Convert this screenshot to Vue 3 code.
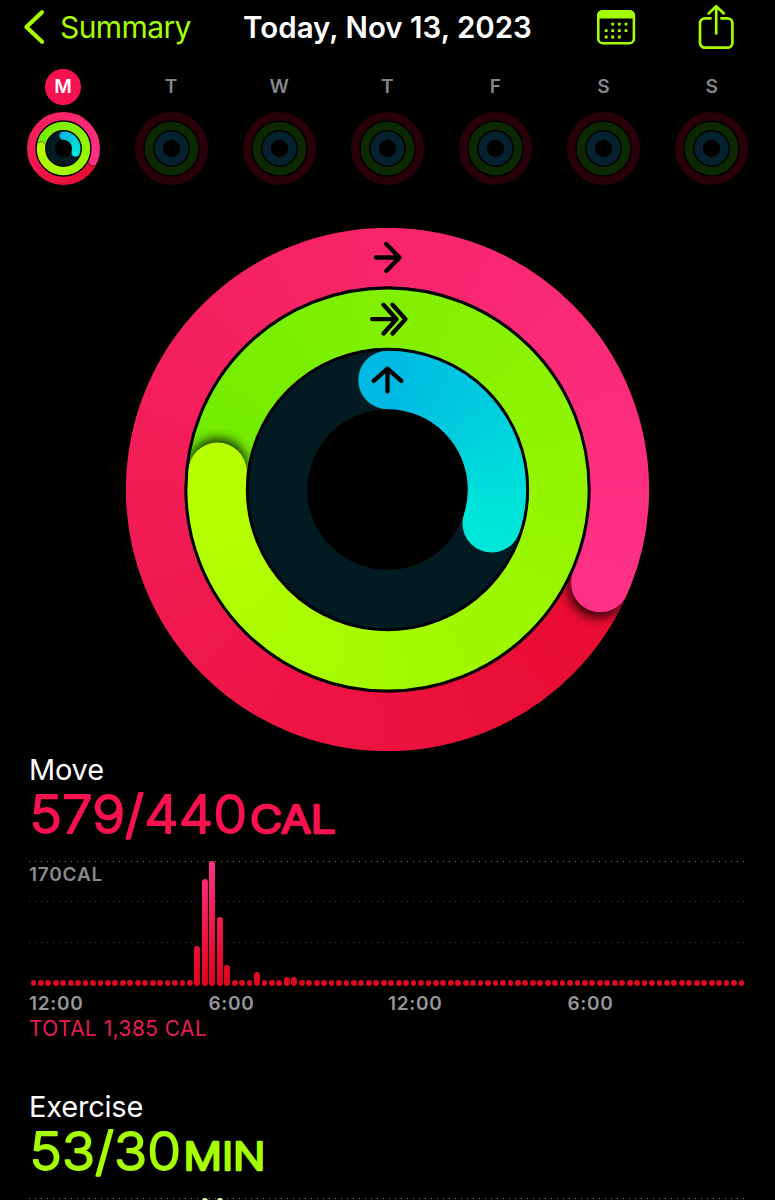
<script setup>
import { h } from 'vue';

const RINGS = [
  { key: 'move', from: [225, 0, 20], to: [255, 49, 135], track: '#250006', idle: '#280007' },
  { key: 'exercise', from: [59, 221, 0], to: [184, 255, 0], track: '#0b2600', idle: '#0b2800' },
  { key: 'stand', from: [0, 185, 226], to: [0, 230, 217], track: '#021b22', idle: '#04212d' },
];

const LARGE = { size: 523, width: 58.4, radii: [232.4, 170.9, 109.5], blur: 6, overlap: 0.5 };
const SMALL = { size: 73, width: 8.3, radii: [32.3, 22.6, 12.8], blur: 0.6, overlap: 8 };

const STEP = 2;

let uid = 0;

function point(c, r, deg) {
  const rad = ((deg - 90) * Math.PI) / 180;
  return [c + r * Math.cos(rad), c + r * Math.sin(rad)];
}

function mix(from, to, t) {
  return `rgb(${from.map((v, i) => Math.round(v + (to[i] - v) * t)).join(',')})`;
}

function drawRing(ring, fraction, layout, index) {
  const c = layout.size / 2;
  const r = layout.radii[index];
  const end = fraction * 360;
  const half = layout.width / 2;
  const band = (stroke) => h('circle', { cx: c, cy: c, r, fill: 'none', stroke, 'stroke-width': layout.width });
  if (!end) return [band(ring.idle)];

  // segments run a little wide and long, the mask trims them to the band
  const segment = (a) => {
    const [x1, y1] = point(c, r, a);
    const [x2, y2] = point(c, r, Math.min(a + STEP + layout.overlap, end));
    return h('path', {
      d: `M${x1} ${y1}A${r} ${r} 0 0 1 ${x2} ${y2}`,
      fill: 'none',
      stroke: mix(ring.from, ring.to, a / end),
      'stroke-width': layout.width + 1,
    });
  };

  const id = `ring-${uid++}`;
  const [sx, sy] = point(c, r, 0);
  const arc = [h('circle', { cx: sx, cy: sy, r: half, fill: mix(ring.from, ring.to, 0) })];

  const tail = Math.max(0, end - 60);
  let a = Math.max(0, end - 420);
  for (; a < tail; a += STEP) arc.push(segment(a));

  if (fraction > 1) {
    const [hx, hy] = point(c, r, end + 1.2);
    arc.push(h('circle', { cx: hx, cy: hy, r: half, fill: '#000', opacity: 0.9, filter: `url(#${id}-blur)` }));
  }

  const [ex, ey] = point(c, r, end);
  arc.push(h('circle', { cx: ex, cy: ey, r: half, fill: mix(ring.from, ring.to, 1) }));
  for (; a < end; a += STEP) arc.push(segment(a));

  return [
    h('mask', { id: `${id}-mask`, maskUnits: 'userSpaceOnUse', x: 0, y: 0, width: layout.size, height: layout.size }, [
      band('#fff'),
    ]),
    h('filter', { id: `${id}-blur`, x: '-50%', y: '-50%', width: '200%', height: '200%' }, [
      h('feGaussianBlur', { stdDeviation: layout.blur }),
    ]),
    band(ring.track),
    h('g', { mask: `url(#${id}-mask)` }, arc),
  ];
}

const ActivityRings = ({ values, layout }) =>
  h(
    'svg',
    { width: layout.size, height: layout.size, viewBox: `0 0 ${layout.size} ${layout.size}` },
    RINGS.map((ring, i) => h('g', { key: ring.key }, drawRing(ring, values[i], layout, i))),
  );
ActivityRings.props = ['values', 'layout'];

const today = [579 / 440, 53 / 30, 0.3];
const empty = [0, 0, 0];

const days = [
  { label: 'M', values: today, selected: true },
  { label: 'T', values: empty },
  { label: 'W', values: empty },
  { label: 'T', values: empty },
  { label: 'F', values: empty },
  { label: 'S', values: empty },
  { label: 'S', values: empty },
];

// quarter-hour buckets, height in px
function buckets(filled) {
  return Array.from({ length: 96 }, (_, i) => filled[i] ?? 6);
}

const sections = [
  {
    key: 'move',
    title: 'Move',
    value: '579/440',
    valueWidth: 217.5,
    unit: 'CAL',
    unitX: 221,
    unitWidth: 85.5,
    peak: '170CAL',
    total: 'TOTAL 1,385 CAL',
    hours: ['12:00', '6:00', '12:00', '6:00'],
    bars: buckets({ 22: 40, 23: 107, 24: 125, 25: 69, 26: 21, 30: 14.5, 31: 6.5, 34: 9, 35: 9 }),
  },
  {
    key: 'exercise',
    title: 'Exercise',
    value: '53/30',
    valueWidth: 151.5,
    unit: 'MIN',
    unitX: 154.5,
    unitWidth: 82,
    bars: buckets({ 23: 125, 25: 125 }),
  },
];
</script>

<template>
  <main class="screen">
    <header class="nav">
      <a class="nav__back">
        <svg width="22" height="36" viewBox="0 0 22 36">
          <path d="M19 3.2 3.4 18 19 32.8" fill="none" stroke="currentColor" stroke-width="4.2" stroke-linecap="round" stroke-linejoin="round" />
        </svg>
        <span class="nav__back-label">Summary</span>
      </a>
      <h1 class="nav__title">Today, Nov 13, 2023</h1>
      <div class="nav__actions">
        <svg width="40" height="44" viewBox="0 0 40 44">
          <rect x="2.3" y="7.3" width="35.6" height="32" rx="4.6" fill="none" stroke="currentColor" stroke-width="2.6" />
          <path d="M1 14.6V11.5A5.5 5.5 0 0 1 6.5 6h27A5.5 5.5 0 0 1 39 11.5v3.1Z" fill="currentColor" />
          <path
            d="M16.7 20.2h.01M23.3 20.2h.01M30 20.2h.01M10.2 26.6h.01M16.7 26.6h.01M23.3 26.6h.01M30 26.6h.01M10.2 33h.01M16.7 33h.01M23.3 33h.01"
            stroke="currentColor"
            stroke-width="2.8"
            stroke-linecap="square"
            fill="none"
          />
        </svg>
        <svg width="36" height="46" viewBox="0 0 36 46">
          <path
            d="M12.6 14.3H7A5 5 0 0 0 2 19.3v19.4a5 5 0 0 0 5 5h22.4a5 5 0 0 0 5-5V19.3a5 5 0 0 0-5-5H23.4M18.2 29.4V3M10.6 9.4l7.6-7.2 7.6 7.2"
            fill="none"
            stroke="currentColor"
            stroke-width="2.7"
            stroke-linecap="round"
            stroke-linejoin="round"
          />
        </svg>
      </div>
    </header>

    <nav class="week">
      <div v-for="(day, i) in days" :key="i" class="week__day">
        <span :class="['week__label', { 'week__label--selected': day.selected }]">{{ day.label }}</span>
        <ActivityRings :values="day.values" :layout="SMALL" />
      </div>
    </nav>

    <div class="rings">
      <ActivityRings :values="today" :layout="LARGE" />
      <svg class="rings__icons" width="523" height="523" viewBox="0.5 0.5 523 523">
        <path d="M250.4 30H273.4M260.8 16.6 274 30 260.8 43.4" />
        <path d="M246.6 91.6H270M258 77.2 271 91.6 258 106M267 77.2 280 91.6 267 106" />
        <path d="M262 164V141.4M248.2 153.4 262 141.2 275.8 153.4" />
      </svg>
    </div>

    <section v-for="s in sections" :key="s.key" :class="['metric', `metric--${s.key}`]">
      <h2 class="metric__title">{{ s.title }}</h2>
      <svg class="metric__value" width="400" height="56" viewBox="0 0 400 56">
        <text x="0.5" y="48" font-size="52.6" :textLength="s.valueWidth" lengthAdjust="spacingAndGlyphs">{{ s.value }}</text>
        <text :x="s.unitX" y="48" font-size="38.5" :textLength="s.unitWidth" lengthAdjust="spacingAndGlyphs" class="metric__unit">{{ s.unit }}</text>
      </svg>
      <div class="chart">
        <div class="chart__grid">
          <span v-if="s.peak" class="chart__peak">{{ s.peak }}</span>
        </div>
        <div class="chart__bars">
          <span v-for="(bar, i) in s.bars" :key="i" class="chart__bar" :style="{ height: `${bar}px` }" />
        </div>
      </div>
      <div v-if="s.hours" class="metric__hours">
        <span v-for="(hour, i) in s.hours" :key="i">{{ hour }}</span>
      </div>
      <p v-if="s.total" class="metric__total">{{ s.total }}</p>
    </section>
  </main>
</template>

<style>
body {
  background: #000;
}
</style>

<style scoped>
.screen {
  width: 775px;
  height: 1200px;
  overflow: hidden;
  background: #000;
  color: #fff;
  font-family: Inter, 'Liberation Sans', sans-serif;
}

.screen svg {
  display: block;
}

.nav {
  display: grid;
  grid-template-columns: 1fr auto 1fr;
  align-items: center;
  height: 54px;
  padding: 0 23px;
}

.nav__back {
  display: flex;
  align-items: center;
  gap: 15px;
  color: #a6ff00;
}

.nav__back-label {
  font-size: 30px;
  line-height: 36px;
  letter-spacing: -0.6px;
}

.nav__title {
  margin: 0;
  font-size: 29.5px;
  font-weight: 600;
  line-height: 36px;
}

.nav__actions {
  display: flex;
  justify-content: flex-end;
  gap: 62px;
  padding-right: 18px;
  color: #a6ff00;
}

.week {
  display: grid;
  grid-template-columns: repeat(7, 108.1px);
  padding: 15px 0 0 9px;
}

.week__day {
  display: flex;
  flex-direction: column;
  align-items: center;
  gap: 7px;
}

.week__label {
  width: 36px;
  height: 36px;
  border-radius: 50%;
  color: #85858a;
  font-size: 19px;
  font-weight: 600;
  line-height: 36px;
  text-align: center;
}

.week__label--selected {
  background: #fa114f;
  color: #fff;
}

.rings {
  position: relative;
  width: 523px;
  margin: 43px 0 0 126px;
}

.rings__icons {
  position: absolute;
  inset: 0;
  fill: none;
  stroke: #000;
  stroke-width: 4.3;
  stroke-linecap: round;
  stroke-linejoin: round;
}

.metric {
  height: 336.7px;
  padding-left: 29px;
}

.metric__title {
  margin: 0;
  padding-top: 1px;
  font-size: 29px;
  font-weight: 400;
  line-height: 36px;
  letter-spacing: -0.2px;
}

/* light glyphs with a round-joined outline give soft terminals */
.metric__value {
  margin-top: -3px;
  overflow: visible;
  fill: var(--accent);
  stroke: var(--accent);
  stroke-width: 1.9;
  stroke-linejoin: round;
  font-weight: 300;
}

.metric__unit {
  stroke-width: 2.6;
}

.chart {
  position: relative;
  height: 125px;
  width: 716px;
  margin-top: 20px;
}

.chart__grid {
  height: 125px;
  background:
    repeating-linear-gradient(90deg, #85858a 0 1.4px, transparent 1.4px 6px) 0 0 / 100% 1px no-repeat,
    repeating-linear-gradient(90deg, #48484b 0 1.4px, transparent 1.4px 6px) 0 40px / 100% 1px no-repeat,
    repeating-linear-gradient(90deg, #48484b 0 1.4px, transparent 1.4px 6px) 0 81px / 100% 1px no-repeat;
}

.chart__peak {
  display: block;
  padding-top: 2px;
  color: #8a8a8e;
  font-size: 19px;
  font-weight: 600;
  line-height: 23px;
  letter-spacing: 0.8px;
}

.chart__bars {
  position: absolute;
  inset: 0 0 0 1.5px;
  display: grid;
  grid-template-columns: repeat(96, 7.456px);
  align-items: end;
}

.chart__bar {
  width: 5.8px;
  border-radius: 3px;
  background: var(--bar) bottom / 100% 125px no-repeat;
}

.metric__hours {
  display: grid;
  grid-template-columns: repeat(4, 179.5px);
  margin-top: 6px;
  color: #95959a;
  font-size: 19px;
  font-weight: 600;
  line-height: 24px;
  letter-spacing: 0.7px;
}

.metric__total {
  margin: 0;
  color: #e81c55;
  font-size: 20.8px;
  line-height: 26px;
  letter-spacing: 0.5px;
}

.metric--move {
  --accent: #fa114f;
  --bar: linear-gradient(0deg, #e00619 0%, #e60b2a 20%, #ff3187 100%);
}

.metric--exercise {
  --accent: #a6ff00;
  --bar: linear-gradient(0deg, #a6ff00 0%, #e4ffa8 100%);
}
</style>
